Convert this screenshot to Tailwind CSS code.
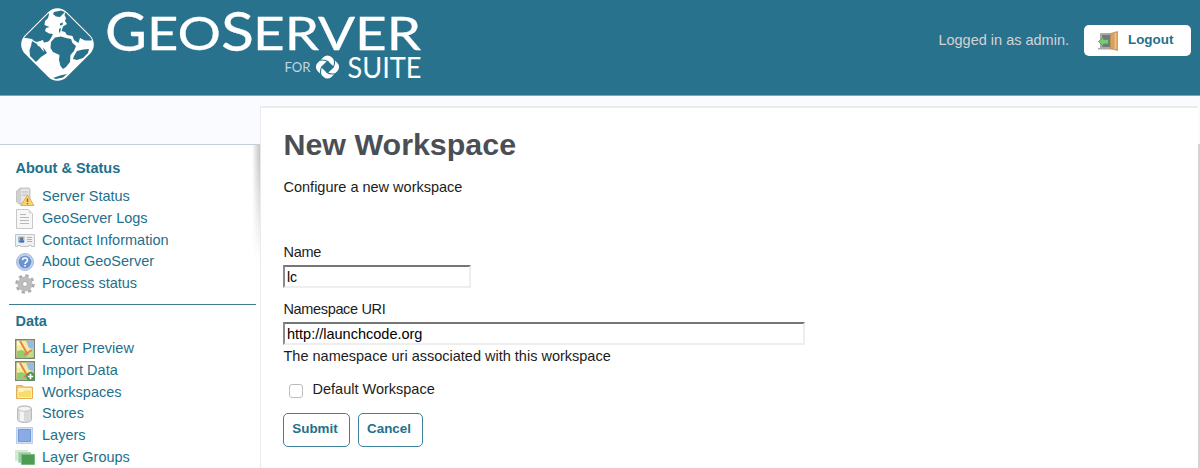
<!DOCTYPE html>
<html lang="en">
<head>
<meta charset="utf-8">
<title>GeoServer: New Workspace</title>
<script src="https://cdn.jsdelivr.net/npm/@tailwindcss/browser@4"></script>
</head>
<body class="h-[468px] overflow-hidden bg-[#fafbfe] text-[14.5px] text-[#1c1c1c] font-['Liberation_Sans',Arial,sans-serif]">
<header class="flex h-24 items-start justify-between border-b border-[#7ba7b8] bg-[#29728e] pr-[9px]">
  <svg class="h-[95px] w-[430px] overflow-visible" viewBox="0 0 430 95" role="img" aria-label="GeoServer for Suite">
    <clipPath id="globe"><rect x="29" y="16" width="57" height="57" rx="12" transform="rotate(45 57.5 44.5)"/></clipPath>
    <rect x="28" y="15" width="59" height="59" rx="13" transform="rotate(45 57.5 44.5)" fill="#fff"/>
    <g clip-path="url(#globe)" fill="#29728e">
      <path d="M15 36 L26 38 L32 39 L34 41 L37 42 L42 40.500 L43 43 L47 42 L49 41 L51 38 L53 34 L49 33.500 L45 31 L46 28 L49.500 27 L44.500 25 L45 21 L48 18 L49 14.500 L47 5 L15 5Z"/>
      <path d="M32 41 L37 44 L38 46 L43 47.500 L45 50 L47 53 L41 57 L36 62 L30 56 L29.500 50 L31 46Z"/>
      <path d="M66 11 L64.500 15 L66 18 L65 21 L67 24 L63 26.500 L61.500 31 L65 32 L67 35 L72.500 36 L74 40 L78.500 43 L80 38 L85 40.500 L91 40.500 L98 38 L98 5Z"/>
      <path d="M54 12 L61 10.500 L65 12 L62 15 L60 17 L56 16.500 L53 14Z"/>
      <path d="M51 42 L55 37.500 L61 36.500 L66 38 L71 39 L72.500 43 L76 46 L74 51 L70.500 55 L70 62 L66 67 L63 69 L60.500 66 L59 60 L59.500 55 L53 52 L50.500 48Z"/>
      <path d="M74 56 L77 51 L83 49.500 L89 49 L88 53 L83 58 L77 60 L73 59Z"/>
      <path d="M53 78 L60 75.500 L67 74 L63 77.500 L56 79Z"/>
      <path d="M60 23.500 L63 22.500 L62.500 25 L60 25.500Z M59 29 L61 28 L60 33 L59 32Z"/>
    </g>
    <path fill="#fff" d="m38 42 5-2 1 3 3-1 1 3-2 3-3-1 1 5-4-5z"/>
    <g fill="#fff" stroke="#fff" font-family="Lato, sans-serif">
      <text x="105" y="50.500" font-size="54" stroke-width=".3" textLength="42" lengthAdjust="spacingAndGlyphs">G</text>
      <text x="147" y="50" font-size="45.500" stroke-width=".3" textLength="74" lengthAdjust="spacingAndGlyphs">EO</text>
      <text x="221" y="50.500" font-size="54" stroke-width=".3" textLength="33" lengthAdjust="spacingAndGlyphs">S</text>
      <text x="253" y="50" font-size="45.500" stroke-width=".3" textLength="168" lengthAdjust="spacingAndGlyphs">ERVER</text>
      <text x="284.500" y="72" font-size="13.500" fill="#c2d8e0" stroke="none" textLength="26" lengthAdjust="spacingAndGlyphs">FOR</text>
      <text x="347.500" y="77.500" font-size="28" stroke="none" textLength="74" lengthAdjust="spacingAndGlyphs">SUITE</text>
    </g>
    <g transform="translate(327.500 67)">
      <rect x="-9.800" y="-9.800" width="19.600" height="19.600" rx="5.500" fill="#fff" transform="rotate(45)"/>
      <rect x="-4.600" y="-4.600" width="9.200" height="9.200" rx="1" fill="#29728e" transform="rotate(45)"/>
      <g fill="none" stroke="#29728e" stroke-width="1.100">
        <path d="M-8.500 -6.500 C-5 -7.500 -1.500 -7 1 -5"/>
        <path d="M-8.500 -6.500 C-5 -7.500 -1.500 -7 1 -5" transform="rotate(90)"/>
        <path d="M-8.500 -6.500 C-5 -7.500 -1.500 -7 1 -5" transform="rotate(180)"/>
        <path d="M-8.500 -6.500 C-5 -7.500 -1.500 -7 1 -5" transform="rotate(270)"/>
      </g>
    </g>
  </svg>
  <div class="mt-[25px] flex h-[31px] items-center gap-[15px]">
    <span class="text-[#d3d3d3]">Logged in as admin.</span>
    <a class="flex h-[31px] w-[107px] items-center rounded-[5px] bg-white pl-[14px] text-[13.4px] font-bold text-[#23708c]">
      <svg class="mr-2.5 size-5" viewBox="0 0 20 20">
        <path fill="#a9aba9" d="M2 2h11v15H2z"/><path fill="#737b7a" d="M4 4h8v12H4z"/><path fill="#aaa" d="M0 17h15v1.500H0z"/>
        <path fill="#d9a260" stroke="#b58a55" stroke-width=".7" d="M12.500 2.500 19.500.5v19l-7-2z"/><path stroke="#efc58b" stroke-width="1.500" d="M17.500 2v16"/>
        <path fill="#7cc878" stroke="#4a9a50" stroke-width=".8" d="M.5 10.500 5.500 6v2.500h5v4.500h-5v2.500z"/>
      </svg>Logout</a>
  </div>
</header>
<div class="flex h-[372px]">
  <aside class="w-[260px] shrink-0 pt-[48px]">
    <nav class="relative h-[324px] border-t border-[#c3d0da] bg-white pt-[13px] text-[#23708c]">
      <div class="absolute right-0 top-0 h-[115px] w-[8px] bg-linear-to-l from-[#c4c4c4] to-white mask-b-from-10%"></div>
      <h2 class="pl-[15.500px] text-[14.5px] leading-[20px] font-bold">About &amp; Status</h2>
      <ul class="mt-[8px] pl-[15px] leading-[21.8px] [&>li]:flex [&>li]:h-[21.8px] [&>li]:items-center [&>li]:gap-[7px] [&_svg]:size-5">
        <li><svg viewBox="0 0 20 20"><path fill="#d0d0d0" stroke="#c4c4c4" d="M1.500 4 5 1h9l1 1v14l-9 2-4.500-3z"/><path fill="#e6e6e6" d="M6 2h8v13H6z"/><path stroke="#bbb" d="M7 5h6M7 8h6"/><path fill="#f9d56e" stroke="#e3ad50" stroke-linejoin="round" d="m12.500 8 6.500 10.500H6z"/><path stroke="#8d6c28" stroke-width="1.500" d="M12.500 11.500v3.500m0 1v1.300"/></svg>Server Status</li>
        <li><svg viewBox="0 0 20 20"><path fill="#f7f7f7" stroke="#c8c8c8" d="M1.500.5h12l4 4v15h-16z"/><path fill="#ddd" d="M13.500.5v4h4z"/><path stroke="#b8b8b8" d="M5 5.500h6M5 8.500h9M5 11.500h9M5 14.500h9"/></svg>GeoServer Logs</li>
        <li><svg viewBox="0 0 20 20"><path fill="#f0f0f0" stroke="#c4c4c4" d="M.5 4.500h19v12h-3v-1h-3v1h-8v-1h-3v1h-2z"/><path fill="#85c0f0" d="M3 6.500h6.500v6H3z"/><path fill="#a06b45" d="M5 7.500h3v3H5z"/><path fill="#3f6caa" d="M4.500 10.500h4.500v2H4.500z"/><path stroke="#a9b6c2" d="M12 7.500h5M12 9.500h5M12 11.500h5"/></svg>Contact Information</li>
        <li><svg viewBox="0 0 20 20"><circle cx="10" cy="10" r="8.500" fill="#bfd1ec" stroke="#a9bddb"/><circle cx="10" cy="10" r="6.300" fill="#6a93cf"/><path fill="none" stroke="#fff" stroke-width="1.600" d="M7.500 8.200c0-3 5-3 5 0 0 2-2.500 1.800-2.500 3.800m0 1v1.600"/></svg>About GeoServer</li>
        <li><svg viewBox="0 0 20 20"><circle cx="10" cy="10" r="8" fill="none" stroke="#ababab" stroke-width="3.400" stroke-dasharray="3.140 3.140"/><circle cx="10" cy="10" r="5" fill="none" stroke="#bdbdbd" stroke-width="5"/><circle cx="10" cy="10" r="2.500" fill="#fff" stroke="#999" stroke-width=".8"/></svg>Process status</li>
      </ul>
      <hr class="mt-[9px] ml-[9px] w-[247px] border-[#3f7c92]">
      <h2 class="mt-[6px] pl-[15.500px] text-[14.5px] leading-[20px] font-bold">Data</h2>
      <ul class="mt-[7px] pl-[15px] leading-[21.8px] [&>li]:flex [&>li]:h-[21.8px] [&>li]:items-center [&>li]:gap-[7px] [&_svg]:size-5">
        <li><svg viewBox="0 0 20 20"><g id="map"><path fill="#f5ec98" stroke="#7b8575" stroke-width="1.400" d="M.7.700h18.600v18.600H.7z"/><path fill="#fff" d="M2 2h4l2 4-6 1z" opacity=".5"/><path fill="#96b9ec" d="M11 2h7v8l-4-1z"/><path fill="#94cc70" d="M2 12l5-1 5 3v4H2z"/><path fill="#c0e08c" d="m13 12 5-2v8h-6z"/><path fill="none" stroke="#ea7a50" stroke-width="1.800" d="m5 2 8 14M9 16l8-5"/></g></svg>Layer Preview</li>
        <li><svg viewBox="0 0 20 20"><use href="#map"/><circle cx="15.500" cy="15.500" r="4.400" fill="#43964a"/><path stroke="#fff" stroke-width="1.700" d="M12.800 15.500h5.400m-2.700-2.700v5.400"/></svg>Import Data</li>
        <li><svg viewBox="0 0 20 20"><path fill="#f8c768" stroke="#e5ac58" stroke-linejoin="round" d="M1.500 4V3.500h6l1 1.500h9v11.500h-16z"/><path fill="#fff2c8" d="M3 6h13.500v3H3z"/><path fill="#fadc68" stroke="#fff0b5" d="M3 9.500h5L10 8h6.500v7.500H3z"/></svg>Workspaces</li>
        <li><svg viewBox="0 0 20 20"><path fill="#dadada" stroke="#b8b8b8" d="M2.500 4.500C2.500 1 16.500 1 16.500 4.500v11c0 4-14 4-14 0z"/><path fill="#f4f4f4" d="M5 6h4v11H5z"/><ellipse cx="9.500" cy="4.800" rx="6.500" ry="2.500" fill="#f4f4f4" stroke="#c4c4c4"/></svg>Stores</li>
        <li><svg viewBox="0 0 20 20"><path fill="#d3dff5" stroke="#bccdec" d="M1.500 1.500h16v16h-16z"/><path fill="#8aabe4" stroke="#7599d6" d="M3.500 3.500h12v12h-12z"/></svg>Layers</li>
        <li><svg viewBox="0 0 20 20"><path fill="#d3ead4" d="M0 2h13v11H0z"/><path fill="#98cb9d" stroke="#b4dbb7" d="M3.500 4.500h12v10h-12z"/><path fill="#4c9c52" stroke="#7bba82" d="M6.500 6.500h13v10h-13z"/></svg>Layer Groups</li>
      </ul>
    </nav>
  </aside>
  <main class="mt-[10px] h-[362px] w-[938px] border-t-2 border-l border-[#e9ebec] bg-white pl-[22px]">
    <h1 class="mt-[17px] pl-[0.5px] text-[30.4px] leading-[38px] font-bold text-[#4b4f55]">New Workspace</h1>
    <p class="mt-[14px] pl-[0.5px] leading-[20px]">Configure a new workspace</p>
    <label class="mt-[45px] block pl-[0.5px] leading-[20px] tracking-[-0.3px]" for="name">Name</label>
    <input id="name" value="lc" class="mt-[3px] block h-[23px] w-[188px] border-2 border-t-[#767676] border-l-[#8b8b8b] border-r-[#eee] border-b-[#eee] px-[2px] text-[14px] text-black">
    <label class="mt-[11px] block pl-[0.5px] leading-[20px] tracking-[-0.35px]" for="uri">Namespace URI</label>
    <input id="uri" value="http://launchcode.org" class="mt-[3px] block h-[23px] w-[522px] border-2 border-t-[#767676] border-l-[#8b8b8b] border-r-[#eee] border-b-[#eee] px-[2px] text-[14.5px] text-black">
    <p class="mt-px pl-[0.5px] leading-[20px]">The namespace uri associated with this workspace</p>
    <label class="mt-[14px] flex h-5 items-center pl-[6px]"><input type="checkbox" class="mr-[9.5px] mt-px size-[14px] appearance-none rounded-[3px] border border-[#bdbdbd] bg-white">Default Workspace</label>
    <div class="mt-[13px] flex gap-2 font-bold text-[#23708c]">
      <button class="h-[34px] w-[67px] rounded-[5px] border border-[#3e829c] pr-[3px] pb-[2px] text-[13.4px]">Submit</button>
      <button class="h-[34px] w-[65px] rounded-[5px] border border-[#3e829c] pr-[3px] pb-[2px] text-[13.4px]">Cancel</button>
    </div>
  </main>
  <div class="mt-[48px] w-[2px] bg-[#d2d3d5]"></div>
</div>
</body>
</html>
